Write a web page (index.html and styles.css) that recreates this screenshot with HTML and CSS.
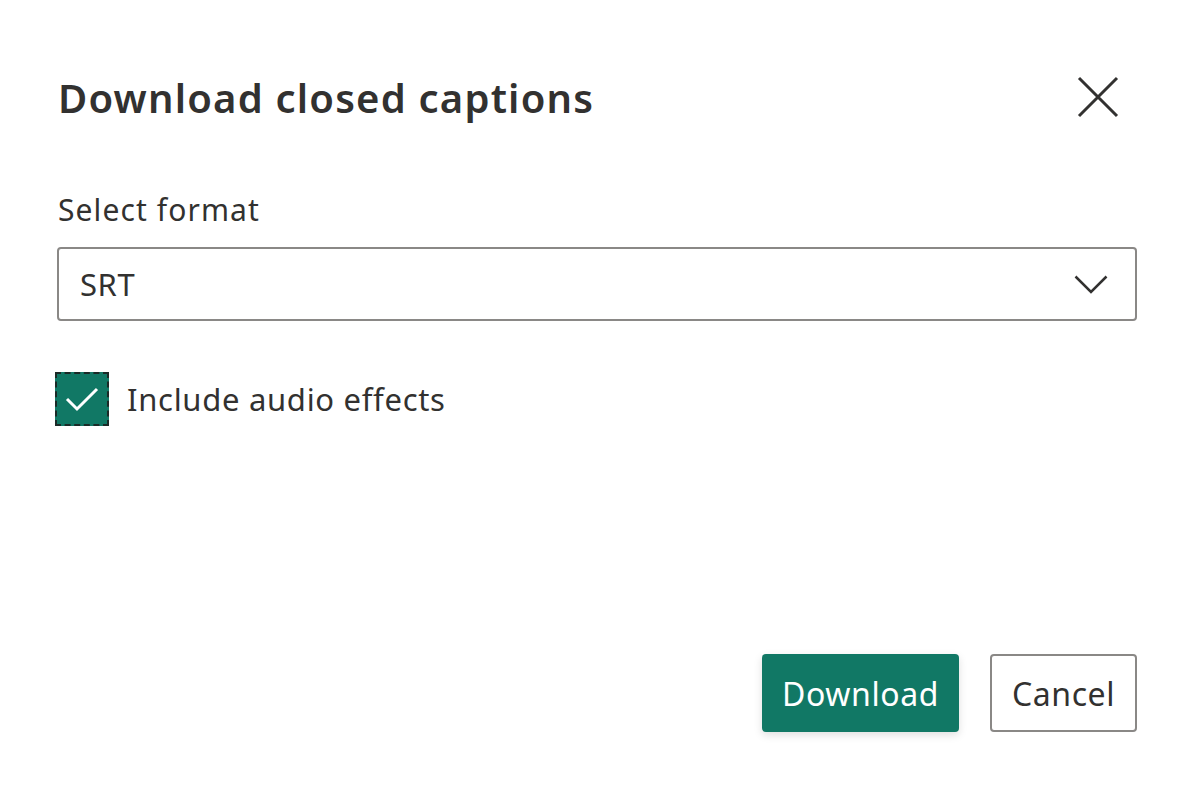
FILE: index.html
```html
<!DOCTYPE html>
<html lang="en">
<head>
<meta charset="utf-8">
<title>Download closed captions</title>
<link rel="stylesheet" href="styles.css">
</head>
<body>
<div class="dialog">
  <div class="header">
    <h1 class="title">Download closed captions</h1>
    <button class="close" aria-label="Close">
      <svg width="42" height="42" viewBox="0 0 42 42"><path d="M2 2 L40 40 M40 2 L2 40" stroke="#323130" stroke-width="3" fill="none"/></svg>
    </button>
  </div>
  <div class="body">
    <div class="field-label">Select format</div>
    <div class="dropdown">
      <span class="dropdown-value">SRT</span>
      <svg class="chevron" width="34" height="19" viewBox="0 0 34 19"><path d="M1.5 1.5 L17 17 L32.5 1.5" stroke="#323130" stroke-width="2.5" fill="none"/></svg>
    </div>
    <label class="check-row">
      <span class="checkbox">
        <svg width="34" height="26" viewBox="0 0 34 26"><path d="M2 13 L12 23 L32 3" stroke="#fff" stroke-width="3" fill="none"/></svg>
      </span>
      <span class="check-label">Include audio effects</span>
    </label>
  </div>
  <div class="footer">
    <button class="btn btn-primary">Download</button>
    <button class="btn btn-default">Cancel</button>
  </div>
</div>
</body>
</html>
```
FILE: styles.css
```css
html, body {
  margin: 0;
  padding: 0;
  background: #ffffff;
}
body {
  font-family: "Noto Sans", "Open Sans", sans-serif;
  color: #323130;
}
.dialog {
  box-sizing: border-box;
  width: 1196px;
  height: 789px;
  padding: 0 59px 0 57px;
  display: flex;
  flex-direction: column;
}
.header {
  display: flex;
  justify-content: space-between;
  align-items: flex-start;
  height: 190px;
}
.title {
  margin: 70px 0 0 1px;
  font-size: 40px;
  font-weight: 600;
  line-height: 56px;
  letter-spacing: 1.2px;
}
.close {
  margin: 76px 18px 0 0;
  padding: 0;
  border: 0;
  background: none;
  width: 42px;
  height: 42px;
}
.field-label {
  font-size: 30px;
  line-height: 40px;
  letter-spacing: 1.1px;
  margin: 0 0 17px 1px;
}
.dropdown {
  box-sizing: border-box;
  height: 74px;
  border: 2px solid #8a8886;
  border-radius: 4px;
  display: flex;
  align-items: center;
  justify-content: space-between;
  padding: 0 27px 0 21px;
}
.dropdown-value {
  font-size: 31px;
  line-height: 40px;
  letter-spacing: 0.6px;
}
.check-row {
  display: flex;
  align-items: center;
  margin-top: 51px;
  gap: 18px;
}
.checkbox {
  box-sizing: border-box;
  width: 54px;
  height: 54px;
  margin-left: -2px;
  background: #117865;
  border: 2px dashed #1b2a27;
  display: flex;
  align-items: center;
  justify-content: center;
}
.check-label {
  font-size: 31px;
  line-height: 40px;
  letter-spacing: 0.7px;
}
.footer {
  margin-top: auto;
  margin-bottom: 57px;
  display: flex;
  justify-content: flex-end;
  gap: 31px;
}
.btn {
  box-sizing: border-box;
  height: 78px;
  font-family: "Noto Sans", "Open Sans", sans-serif;
  font-size: 32px;
  letter-spacing: 0.6px;
  border-radius: 4px;
  padding: 0;
}
.btn-primary {
  width: 197px;
  background: #117865;
  color: #ffffff;
  border: 0;
  box-shadow: 0 3px 8px rgba(0, 0, 0, 0.13);
}
.btn-default {
  width: 147px;
  background: #ffffff;
  color: #323130;
  border: 2px solid #8a8886;
}
```
